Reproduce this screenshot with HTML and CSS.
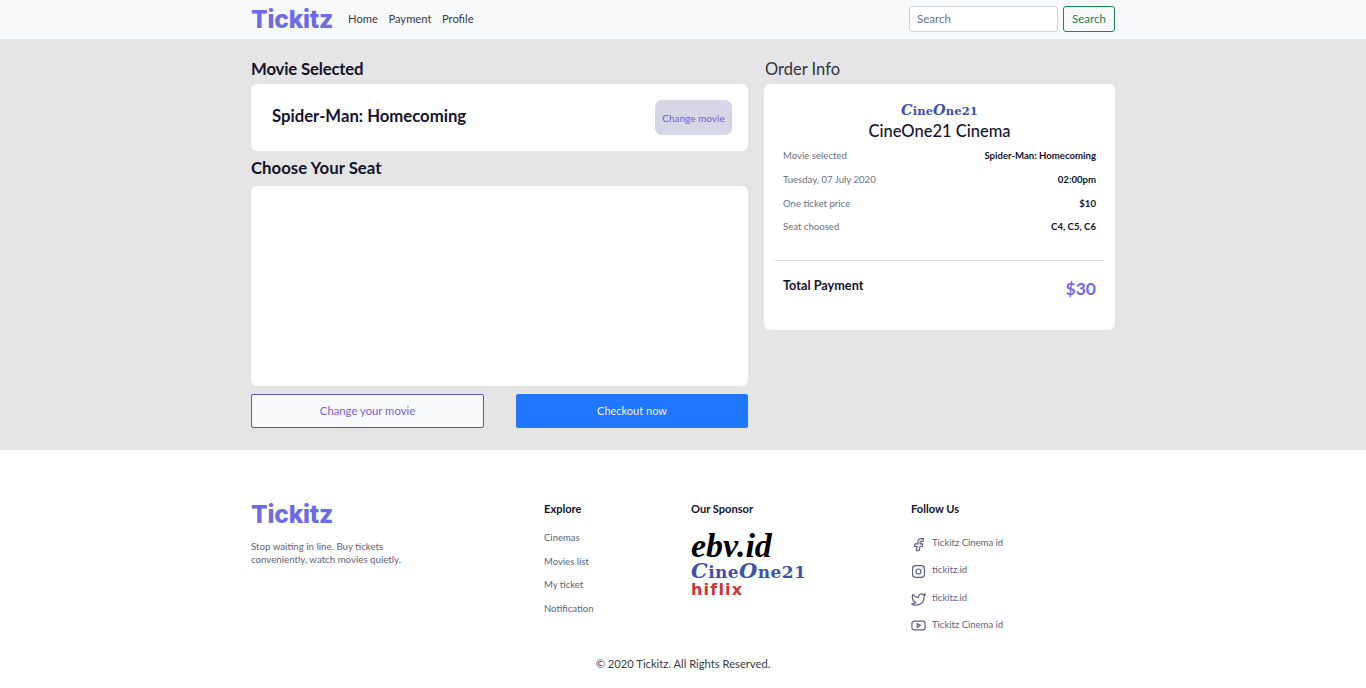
FILE: index.html
```html
<!DOCTYPE html>
<html lang="en">
<head>
<meta charset="utf-8">
<title>Tickitz</title>
<link rel="stylesheet" href="styles.css">
</head>
<body>
<header class="navbar">
  <div class="wrap nav-inner">
    <div class="brand">Tickitz</div>
    <nav class="nav-links"><a>Home</a><a>Payment</a><a>Profile</a></nav>
    <form class="search">
      <input class="search-input" placeholder="Search">
      <button class="search-btn" type="button">Search</button>
    </form>
  </div>
</header>
<main class="main">
  <div class="wrap columns">
    <section class="left">
      <h2 class="section-title first">Movie Selected</h2>
      <div class="card movie-card">
        <h3 class="movie-name">Spider-Man: Homecoming</h3>
        <button class="change-small" type="button">Change movie</button>
      </div>
      <h2 class="section-title second">Choose Your Seat</h2>
      <div class="card seat-card"></div>
      <div class="actions">
        <button class="btn-outline" type="button">Change your movie</button>
        <button class="btn-primary" type="button">Checkout now</button>
      </div>
    </section>
    <aside class="right">
      <h2 class="order-title">Order Info</h2>
      <div class="card order-card">
        <div class="cine-logo"><span class="cap">C</span>ine<span class="cap">O</span>ne21</div>
        <h3 class="cinema-name">CineOne21 Cinema</h3>
        <dl class="rows">
          <div class="row"><dt>Movie selected</dt><dd>Spider-Man: Homecoming</dd></div>
          <div class="row"><dt>Tuesday, 07 July 2020</dt><dd>02:00pm</dd></div>
          <div class="row"><dt>One ticket price</dt><dd>$10</dd></div>
          <div class="row"><dt>Seat choosed</dt><dd>C4, C5, C6</dd></div>
        </dl>
        <hr class="divider">
        <div class="total"><span class="total-label">Total Payment</span><span class="total-value">$30</span></div>
      </div>
    </aside>
  </div>
</main>
<footer class="footer">
  <div class="wrap footer-grid">
    <div class="f-about">
      <div class="brand">Tickitz</div>
      <p class="about-text">Stop waiting in line. Buy tickets<br>conveniently, watch movies quietly.</p>
    </div>
    <div class="f-explore">
      <h4 class="f-title">Explore</h4>
      <ul class="f-list"><li>Cinemas</li><li>Movies list</li><li>My ticket</li><li>Notification</li></ul>
    </div>
    <div class="f-sponsor">
      <h4 class="f-title">Our Sponsor</h4>
      <div class="sponsors">
        <div class="s-ebv">ebv.id</div>
        <div class="s-cine"><span class="cap">C</span>ine<span class="cap">O</span>ne21</div>
        <div class="s-hiflix">hiflix</div>
      </div>
    </div>
    <div class="f-follow">
      <h4 class="f-title">Follow Us</h4>
      <ul class="social">
        <li><svg viewBox="0 0 24 24" class="ico ico-fb"><path d="M20 2.500h-3.500a5.500 5.500 0 0 0-5.500 5.500v3H6.500l-1 4.200H10l-1.500 6.800h4.500l1.200-6.800h3.600l1-4.200h-4.200V8.500a1.500 1.500 0 0 1 1.500-1.500H19z"/></svg>Tickitz Cinema id</li>
        <li><svg viewBox="0 0 24 24" class="ico"><rect x="2.500" y="2.500" width="19" height="19" rx="5"/><circle cx="12" cy="12" r="4"/><path d="M17.500 6.500h.01"/></svg>tickitz.id</li>
        <li><svg viewBox="0 0 24 24" class="ico"><path d="M23 3a10.900 10.900 0 0 1-3 1.500 4.500 4.500 0 0 0-7.900 3v1A10.700 10.700 0 0 1 3 4s-4 9 5 13a11.600 11.600 0 0 1-7 2c9 5 20 0 20-11.500a4.500 4.500 0 0 0-.1-.8A7.700 7.700 0 0 0 23 3z"/></svg>tickitz.id</li>
        <li><svg viewBox="0 0 24 24" class="ico ico-yt"><rect x="1.500" y="5" width="21" height="14" rx="3.500"/><path d="M10 9l5 3-5 3z"/></svg>Tickitz Cinema id</li>
      </ul>
    </div>
  </div>
  <p class="copyright">© 2020 Tickitz. All Rights Reserved.</p>
</footer>
</body>
</html>
```
FILE: styles.css
```css
* { box-sizing: border-box; }
html, body { margin: 0; padding: 0; }
body { font-family: "Lato", "Noto Sans", sans-serif; color: #14142b; background: #fff; width: 1366px; }
h2, h3, h4, p, ul, dl, dd { margin: 0; padding: 0; }
ul { list-style: none; }
.wrap { width: 864px; margin: 0 auto; }

.navbar { height: 39px; background: #f8f9fa; }
.nav-inner { display: flex; align-items: center; height: 38px; }
.brand { font-family: "Inter", sans-serif; font-weight: 800; font-size: 24.6px; line-height: 30px; color: #6e6ae8; letter-spacing: -0.2px; }
.nav-links { display: flex; gap: 10.500px; margin: 0 0 2px 15px; font-size: 11.200px; color: #3a3a45; }
.search { display: flex; gap: 5px; margin-left: auto; }
.search-input { width: 149px; height: 26px; border: 1px solid #ced4da; border-radius: 3px; padding: 0 7px 2px; font: 11.500px "Lato", sans-serif; background: #fff; }
.search-input::placeholder { color: #6c757d; }
.search-btn { width: 52px; height: 26px; border: 1px solid #198754; border-radius: 3px; background: transparent; color: #198754; font: 11.500px "Lato", sans-serif; padding: 0 0 2px; }

.main { height: 411px; background: #e5e5e5; }
.columns { display: flex; gap: 16px; padding-top: 20px; }
.left { width: 497px; }
.right { width: 351px; }
.card { background: #fff; border-radius: 6px; }
.section-title { font-size: 16.800px; font-weight: 700; line-height: 20px; color: #14142b; }
.section-title.first { margin-bottom: 5px; letter-spacing: -0.2px; }
.section-title.second { margin: 7px 0 8px; }
.movie-card { height: 67px; display: flex; align-items: center; justify-content: space-between; padding: 0 16px 0 21px; }
.movie-name { font-size: 16.700px; font-weight: 700; color: #14142b; padding-bottom: 4px; }
.change-small { width: 77px; height: 35px; border: 0; border-radius: 7px; background: #d6d6e7; color: #6e5fe0; font: 10px "Lato", sans-serif; padding: 0; }
.seat-card { height: 200px; }
.actions { display: flex; justify-content: space-between; margin-top: 8px; }
.btn-outline, .btn-primary { width: 233px; height: 34px; border-radius: 2px; padding: 0 0 1px; }
.btn-outline { background: #f8f9fa; border: 1px solid #5a55c8; color: #7a5fd8; font: 11.300px "Lato", sans-serif; }
.btn-primary { width: 232px; background: #2176ff; border: 1px solid #2176ff; color: #f4f4ff; font: 11px "Lato", sans-serif; }

.order-title { font-size: 16.500px; font-weight: 400; line-height: 20px; color: #33333f; margin-bottom: 5px; padding-left: 1px; }
.order-card { height: 246px; padding: 0 11px; }
.cine-logo { padding-top: 16px; height: 35px; text-align: center; font-family: "DejaVu Serif", serif; font-weight: 700; font-size: 11.500px; line-height: 20px; color: #3f51b0; letter-spacing: 0.1px; }
.cine-logo .cap { font-size: 14.500px; font-style: italic; }
.cinema-name { text-align: center; font-size: 16.500px; font-weight: 500; line-height: 24px; color: #14142b; }
.rows { padding: 0 8px; margin-top: 1px; }
.row { display: flex; justify-content: space-between; align-items: center; height: 23.700px; font-size: 9.600px; }
.row dt { color: #6e7180; }
.row dd { color: #14142b; font-weight: 700; }
.divider { border: 0; border-top: 1px solid #dedede; margin: 21px 0 0; }
.total { display: flex; justify-content: space-between; padding: 16px 8px 0; }
.total-label { font-size: 12.700px; font-weight: 700; line-height: 16px; }
.total-value { font-size: 17.500px; font-weight: 700; line-height: 22px; color: #6e6ae8; margin-top: 1px; }

.footer { height: 238px; background: #fff; }
.footer-grid { display: flex; padding-top: 49px; height: 204px; }
.f-about { width: 293px; }
.about-text { font-size: 9.700px; line-height: 13px; color: #5f6478; margin-top: 11px; }
.f-explore { width: 147px; }
.f-sponsor { width: 220px; }
.f-title { font-size: 11.100px; font-weight: 700; line-height: 20px; color: #14142b; }
.f-list { margin-top: 7px; font-size: 9.500px; color: #5f6478; }
.f-list li { height: 23.600px; line-height: 23.600px; }
.sponsors { margin-top: 11px; }
.s-ebv { font-family: "Liberation Serif", serif; font-style: italic; font-weight: 700; font-size: 34px; line-height: 32px; height: 32px; color: #000; }
.s-cine { font-family: "DejaVu Serif", serif; font-weight: 700; font-size: 17px; line-height: 18px; height: 19px; color: #3f51b0; letter-spacing: 0.4px; }
.s-cine .cap { font-size: 21px; font-style: italic; }
.s-hiflix { font-family: "DejaVu Sans", sans-serif; font-weight: 700; font-size: 16px; line-height: 17px; height: 17px; color: #d0353a; letter-spacing: 1.200px; }
.social { margin-top: 10px; font-size: 9.500px; color: #5f6478; }
.social li { display: flex; align-items: center; gap: 6px; height: 27.300px; }
.ico { width: 15px; height: 15px; fill: none; stroke: #5f5f80; stroke-width: 1.900; stroke-linecap: round; stroke-linejoin: round; flex: none; transform: translateY(2px); }
.ico-yt { transform: translateY(1px); }
.copyright { text-align: center; font-size: 11.200px; line-height: 16px; color: #3a3a45; margin-top: 2px; }
```
